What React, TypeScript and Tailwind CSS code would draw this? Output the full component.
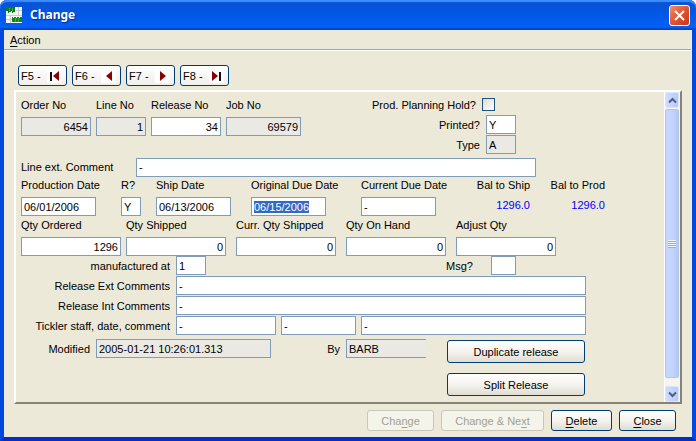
import { useEffect, useRef, type ReactNode } from 'react';
import clsx from 'clsx';

type InputProps = {
  id: string;
  value?: string;
  className: string;
  readOnly?: boolean;
  numeric?: boolean;
  selected?: boolean;
  label?: string;
};

function TextInput({ id, value = '', className, readOnly, numeric, selected, label }: InputProps) {
  const ref = useRef<HTMLInputElement>(null);

  useEffect(() => {
    if (selected) {
      ref.current?.focus();
      ref.current?.select();
    }
  }, [selected]);

  return (
    <input
      ref={ref}
      id={id}
      type="text"
      aria-label={label}
      defaultValue={value}
      readOnly={readOnly}
      className={clsx(
        'h-[19px] shrink-0 border border-[#7f9db9] px-[2px] leading-4 outline-none selection:bg-[#316ac5] selection:text-white',
        readOnly ? 'bg-[#ebe9e4]' : 'bg-white',
        numeric && 'text-right',
        className
      )}
    />
  );
}

// label stacked on top of its input
function Field({ text, ...props }: InputProps & { text: string }) {
  return (
    <div className="flex flex-col">
      <label htmlFor={props.id} className="h-5 leading-4 whitespace-nowrap">
        {text}
      </label>
      <TextInput {...props} />
    </div>
  );
}

function SideLabel({ id, className, children }: { id: string; className?: string; children: ReactNode }) {
  return (
    <label htmlFor={id} className={clsx('shrink-0 pr-[6px] leading-4 whitespace-nowrap', className)}>
      {children}
    </label>
  );
}

function Balance({ text, value }: { text: string; value: string }) {
  return (
    <div className="flex w-[75px] flex-col text-right">
      <span className="h-5 leading-4">{text}</span>
      <output className="leading-4 text-[#0000ff]">{value}</output>
    </div>
  );
}

function XpButton({ children, className, disabled }: { children: ReactNode; className: string; disabled?: boolean }) {
  return (
    <button
      type="button"
      disabled={disabled}
      className={clsx(
        'rounded-[3px] border leading-4 whitespace-nowrap',
        disabled
          ? 'border-[#c9c7ba] bg-[#f5f4ea] text-[#a1a192]'
          : 'border-[#003c74] bg-linear-to-b from-white via-[#f4f3ee] to-[#e0ddd2]',
        className
      )}
    >
      {children}
    </button>
  );
}

function Key({ children }: { children: ReactNode }) {
  return <span className="underline underline-offset-2">{children}</span>;
}

const navButtons = [
  { key: 'F5', name: 'First', bar: 3, arrow: '12,2 12,12 6,7' },
  { key: 'F6', name: 'Previous', bar: 0, arrow: '11,2 11,12 5,7' },
  { key: 'F7', name: 'Next', bar: 0, arrow: '5,2 5,12 11,7' },
  { key: 'F8', name: 'Last', bar: 10, arrow: '3,2 3,12 9,7' },
];

function NavButton({ item }: { item: (typeof navButtons)[number] }) {
  return (
    <button
      type="button"
      aria-label={item.name}
      className="flex h-[21px] w-[49px] items-center justify-between rounded-[3px] border border-[#003c74] bg-linear-to-b from-white to-[#f1efe9] pr-[4px] pl-[2px] leading-4"
    >
      <span>{item.key} -</span>
      <svg width="15" height="14" viewBox="0 0 15 14" className="bg-white">
        {item.bar > 0 && <rect x={item.bar} y="3" width="2" height="9" fill="#111" />}
        <polygon points={item.arrow} fill="#8b0000" />
      </svg>
    </button>
  );
}

function TitleBar() {
  return (
    <header className="flex h-[30px] shrink-0 items-center rounded-t-[7px] bg-linear-to-b from-[#0a51d0] via-[#0058e6] to-[#0063fb] pr-[6px] pl-[6px] shadow-[inset_0_2px_1px_#3d8dff,inset_0_-2px_1px_#0047cf]">
      <svg width="16" height="16" viewBox="0 0 16 16" shapeRendering="crispEdges">
        <rect width="16" height="16" fill="#f6f6f6" />
        <path d="M10 3h6M0 8h16M0 12h6M12 0v8M4 8v8" stroke="#cccccc" />
        <path d="M0 0h9v5H7v1H6V4H5v1H3v1H2V4H0z" fill="#0a7d14" />
        <path d="M6 10h1v1h1v-1h2v1h1v-1h2v1h1v-1h2v5H6z" fill="#0a8a14" />
        <path d="M3 1v3M6 1v3M9 11v4M12 11v4" stroke="#3fae3f" />
      </svg>
      <h1 className="ml-2 grow font-['Noto_Sans',sans-serif] text-[12px] leading-5 font-bold text-white [text-shadow:1px_1px_1px_#0b2a8a]">
        Change
      </h1>
      <button
        type="button"
        aria-label="Close window"
        className="flex h-[21px] w-[21px] items-center justify-center rounded-[3px] border border-white bg-linear-to-br from-[#ee8d6c] via-[#e0542f] to-[#c4371a]"
      >
        <svg width="13" height="13" viewBox="0 0 13 13" stroke="#fff" strokeWidth="2">
          <path d="M2 2l9 9M11 2l-9 9" />
        </svg>
      </button>
    </header>
  );
}

function ScrollBar() {
  const arrow =
    'flex h-4 w-full shrink-0 items-center justify-center rounded-[2px] border border-[#dbe6fd] bg-linear-to-r from-[#cfdcfe] to-[#b7cbf9]';
  return (
    <div className="flex w-4 shrink-0 flex-col border-x border-l-white border-r-[#f5f4f0] bg-[#f5f4f0]">
      <button type="button" aria-label="Scroll up" className={arrow}>
        <svg width="9" height="7" viewBox="0 0 9 7" fill="none" stroke="#4d6185" strokeWidth="2">
          <path d="M1 5.500l3.500-3.500l3.500 3.500" />
        </svg>
      </button>
      <div className="mt-px mb-2 flex grow flex-col items-center justify-center gap-px rounded-[2px] border border-[#b0c4f2] bg-linear-to-r from-[#c8d7fd] via-[#c5d4fd] to-[#b5c8f7]">
        {[0, 1, 2, 3].map((line) => (
          <div key={line} className="h-px w-2 border-t border-[#eef4fe] shadow-[0_1px_0_#8cb0f8]" />
        ))}
      </div>
      <button type="button" aria-label="Scroll down" className={arrow}>
        <svg width="9" height="7" viewBox="0 0 9 7" fill="none" stroke="#4d6185" strokeWidth="2">
          <path d="M1 1.500l3.500 3.500l3.500-3.500" />
        </svg>
      </button>
    </div>
  );
}

function ReleaseForm() {
  return (
    <form className="min-w-0 grow pt-[5px] pl-[5px]">
      <div className="flex h-[60px]">
        <div className="flex gap-[5px]">
          <Field id="order" text="Order No" value="6454" className="w-[70px]" numeric readOnly />
          <Field id="line" text="Line No" value="1" className="w-[50px]" numeric readOnly />
          <Field id="release" text="Release No" value="34" className="w-[70px]" numeric />
          <Field id="job" text="Job No" value="69579" className="w-[75px]" numeric readOnly />
        </div>
        <div className="flex w-[215px] flex-col gap-px">
          <div className="flex h-[17px] items-start justify-end pr-[21px]">
            <SideLabel id="hold">Prod. Planning Hold?</SideLabel>
            <input
              id="hold"
              type="checkbox"
              className="mt-px size-[13px] appearance-none border border-[#1c5180] bg-linear-to-br from-[#dcdcd7] to-white"
            />
          </div>
          <div className="flex items-center justify-end">
            <SideLabel id="printed">Printed?</SideLabel>
            <TextInput id="printed" value="Y" className="w-[30px]" />
          </div>
          <div className="flex items-center justify-end">
            <SideLabel id="type">Type</SideLabel>
            <TextInput id="type" value="A" className="w-[30px]" readOnly />
          </div>
        </div>
      </div>

      <div className="flex h-5 items-center">
        <SideLabel id="comment" className="w-[115px]">
          Line ext. Comment
        </SideLabel>
        <TextInput id="comment" value="-" className="w-[400px]" />
      </div>

      <div className="flex h-10">
        <div className="w-[100px]">
          <Field id="prodDate" text="Production Date" value="06/01/2006" className="w-[75px]" />
        </div>
        <div className="w-[35px]">
          <Field id="r" text="R?" value="Y" className="w-5" />
        </div>
        <div className="w-[95px]">
          <Field id="shipDate" text="Ship Date" value="06/13/2006" className="w-[75px]" />
        </div>
        <div className="w-[110px]">
          <Field id="originalDue" text="Original Due Date" value="06/15/2006" className="w-[75px]" selected />
        </div>
        <div className="w-[94px]">
          <Field id="currentDue" text="Current Due Date" value="-" className="w-[75px]" />
        </div>
        <Balance text="Bal to Ship" value="1296.0" />
        <Balance text="Bal to Prod" value="1296.0" />
      </div>

      <div className="flex gap-[10px]">
        <div className="flex gap-[5px]">
          <Field id="ordered" text="Qty Ordered" value="1296" className="w-[100px]" numeric />
          <Field id="shipped" text="Qty Shipped" value="0" className="w-[100px]" numeric />
        </div>
        <Field id="currShipped" text="Curr. Qty Shipped" value="0" className="w-[100px]" numeric />
        <Field id="onHand" text="Qty On Hand" value="0" className="w-[100px]" numeric />
        <Field id="adjust" text="Adjust Qty" value="0" className="w-[100px]" numeric />
      </div>

      <div className="flex flex-col gap-px">
        <div className="flex items-center">
          <SideLabel id="madeAt" className="w-[155px] text-right">
            manufactured at
          </SideLabel>
          <TextInput id="madeAt" value="1" className="w-[30px]" />
          <SideLabel id="msg" className="ml-[240px] w-[45px]">
            Msg?
          </SideLabel>
          <TextInput id="msg" className="w-[25px]" />
        </div>
        <div className="flex items-center">
          <SideLabel id="extComments" className="w-[155px] text-right">
            Release Ext Comments
          </SideLabel>
          <TextInput id="extComments" value="-" className="w-[410px]" />
        </div>
        <div className="flex items-center">
          <SideLabel id="intComments" className="w-[155px] text-right">
            Release Int Comments
          </SideLabel>
          <TextInput id="intComments" value="-" className="w-[410px]" />
        </div>
        <div className="flex items-center">
          <SideLabel id="staff" className="w-[155px] text-right">
            Tickler staff, date, comment
          </SideLabel>
          <div className="flex gap-[5px]">
            <TextInput id="staff" value="-" className="w-[100px]" />
            <TextInput id="ticklerDate" label="Tickler date" value="-" className="w-[75px]" />
            <TextInput id="ticklerComment" label="Tickler comment" value="-" className="w-[225px]" />
          </div>
        </div>
      </div>

      <div className="flex pt-1 pb-[6px]">
        <div className="flex h-[19px] items-center">
          <SideLabel id="modified" className="w-[75px] text-right">
            Modified
          </SideLabel>
          <TextInput id="modified" value="2005-01-21 10:26:01.313" className="w-[175px]" readOnly />
          <SideLabel id="by" className="w-[75px] text-right">
            By
          </SideLabel>
          <TextInput id="by" value="BARB" className="w-20 border-r-0" readOnly />
        </div>
        <div className="ml-[21px] flex flex-col gap-[10px] pt-px">
          <XpButton className="h-[23px] w-[138px]">Duplicate release</XpButton>
          <XpButton className="h-[23px] w-[138px]">Split Release</XpButton>
        </div>
      </div>
    </form>
  );
}

export default function App() {
  return (
    <div className="flex min-h-screen flex-col rounded-t-[7px] bg-[#0041dc] font-['Liberation_Sans',Arial,sans-serif] text-[11px] text-black">
      <TitleBar />
      <div className="flex grow flex-col border-x-4 border-b-4 border-x-[#0048e0] border-b-[#0030c8] bg-[#ece9d8]">
        <nav className="mr-px flex h-5 items-center border-b border-[#aca899] pl-[6px] shadow-[0_1px_0_#fff]">
          <button type="button" className="leading-4">
            <Key>A</Key>ction
          </button>
        </nav>

        <div className="flex gap-[5px] pt-[15px] pb-1 pl-[14px]">
          {navButtons.map((item) => (
            <NavButton key={item.key} item={item} />
          ))}
        </div>

        <main className="mr-[10px] ml-[10px] flex grow border-2 border-t-white border-r-[#858374] border-b-[#858374] border-l-white">
          <ReleaseForm />
          <ScrollBar />
        </main>

        <footer className="flex justify-end gap-[7px] pt-[6px] pr-4 pb-[6px]">
          <XpButton className="h-[21px] w-[67px]" disabled>
            Cha<Key>n</Key>ge
          </XpButton>
          <XpButton className="h-[21px] w-[103px]" disabled>
            Change &amp; Ne<Key>x</Key>t
          </XpButton>
          <XpButton className="h-[21px] w-[61px]">
            <Key>D</Key>elete
          </XpButton>
          <XpButton className="h-[21px] w-[57px]">
            <Key>C</Key>lose
          </XpButton>
        </footer>
      </div>
    </div>
  );
}
